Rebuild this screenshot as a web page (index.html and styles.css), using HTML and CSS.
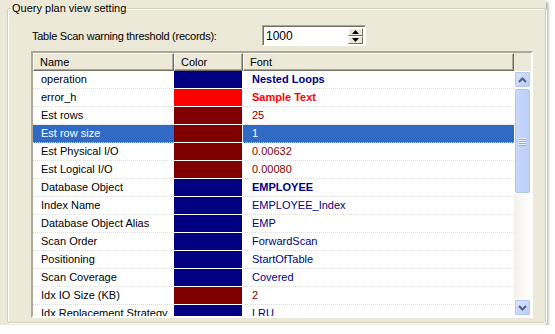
FILE: index.html
```html
<!DOCTYPE html>
<html lang="en">
<head>
  <meta charset="UTF-8" />
  <title>Query plan view setting</title>
  <link rel="stylesheet" href="styles.css">
</head>
<body>
  <div class="window">
    <fieldset class="group">
      <legend>Query plan view setting</legend>

      <div class="threshold">
        <label class="threshold-label">Table Scan warning threshold (records):</label>
        <div class="spin">
          <span class="spin-value">1000</span>
          <div class="spin-btns">
            <span class="spin-btn"><svg width="7" height="4" viewBox="0 0 7 4"><path d="M3.5 0 L7 4 L0 4 Z" fill="#000"/></svg></span>
            <span class="spin-btn"><svg width="7" height="4" viewBox="0 0 7 4"><path d="M0 0 L7 0 L3.5 4 Z" fill="#000"/></svg></span>
          </div>
        </div>
      </div>

      <div class="list">
        <div class="list-head">
          <div class="hcell h-name">Name</div>
          <div class="hcell h-color">Color</div>
          <div class="hcell h-font">Font</div>
          <div class="h-fill"></div>
        </div>
        <div class="list-body">
          <div class="rows">
            <div class="row"><div class="c-name">operation</div><div class="c-color navy-bg"></div><div class="c-font navy b">Nested Loops</div></div>
            <div class="row"><div class="c-name">error_h</div><div class="c-color red-bg"></div><div class="c-font red b">Sample Text</div></div>
            <div class="row"><div class="c-name">Est rows</div><div class="c-color maroon-bg"></div><div class="c-font maroon">25</div></div>
            <div class="row sel"><div class="c-name">Est row size</div><div class="c-color maroon-bg"></div><div class="c-font maroon">1</div></div>
            <div class="row"><div class="c-name">Est Physical I/O</div><div class="c-color maroon-bg"></div><div class="c-font maroon">0.00632</div></div>
            <div class="row"><div class="c-name">Est Logical I/O</div><div class="c-color maroon-bg"></div><div class="c-font maroon">0.00080</div></div>
            <div class="row"><div class="c-name">Database Object</div><div class="c-color navy-bg"></div><div class="c-font navy b">EMPLOYEE</div></div>
            <div class="row"><div class="c-name">Index Name</div><div class="c-color navy-bg"></div><div class="c-font navy">EMPLOYEE_Index</div></div>
            <div class="row"><div class="c-name">Database Object Alias</div><div class="c-color navy-bg"></div><div class="c-font navy">EMP</div></div>
            <div class="row"><div class="c-name">Scan Order</div><div class="c-color navy-bg"></div><div class="c-font navy">ForwardScan</div></div>
            <div class="row"><div class="c-name">Positioning</div><div class="c-color navy-bg"></div><div class="c-font navy">StartOfTable</div></div>
            <div class="row"><div class="c-name">Scan Coverage</div><div class="c-color navy-bg"></div><div class="c-font navy">Covered</div></div>
            <div class="row"><div class="c-name">Idx IO Size (KB)</div><div class="c-color maroon-bg"></div><div class="c-font maroon">2</div></div>
            <div class="row"><div class="c-name">Idx Replacement Strategy</div><div class="c-color navy-bg"></div><div class="c-font navy">LRU</div></div>
          </div>

          <div class="scrollbar">
            <div class="sb-btn"><svg width="9" height="6" viewBox="0 0 9 6"><path d="M1 5 L4.5 1.5 L8 5" fill="none" stroke="#4d6185" stroke-width="2"/></svg></div>
            <div class="sb-thumb">
              <div class="grip"><i></i><i></i><i></i><i></i></div>
            </div>
            <div class="sb-track"></div>
            <div class="sb-btn"><svg width="9" height="6" viewBox="0 0 9 6"><path d="M1 1 L4.5 4.5 L8 1" fill="none" stroke="#4d6185" stroke-width="2"/></svg></div>
          </div>
        </div>
      </div>
    </fieldset>
  </div>
</body>
</html>
```

FILE: styles.css
```css
* {
  box-sizing: border-box;
}

html, body {
  margin: 0;
  background: #fff;
  font-family: 'Liberation Sans', Arial, sans-serif;
  font-size: 11px;
  color: #000;
}

.window {
  width: 546px;
  height: 325px;
  padding: 2px 0 2px 7px;
  background: #ece9d8;
  box-shadow: 2px 2px 3px rgba(0,0,0,0.35);
}

.group {
  margin: 0;
  padding: 0 12px 4px 23px;
  border: 1px solid #d0d0bf;
  border-radius: 2px;
  box-shadow: 1px 1px 0 #fff, inset 1px 1px 0 #fff;
}

.group legend {
  margin-left: -20px;
  padding: 0 1px;
  line-height: 13px;
}

/* threshold row */
.threshold {
  display: flex;
  align-items: center;
  margin-top: 10px;
  height: 21px;
}

.threshold-label {
  width: 231px;
  padding-left: 1px;
  letter-spacing: -0.25px;
}

.spin {
  display: flex;
  align-items: center;
  width: 104px;
  height: 21px;
  background: #fff;
  border: 1px solid;
  border-color: #aca899 #fff #fff #aca899;
  box-shadow: inset 1px 1px 0 #716f64;
  padding: 1px 2px 0 3px;
}

.spin-value {
  flex: 1;
  font-size: 12px;
}

.spin-btns {
  display: flex;
  flex-direction: column;
}

.spin-btn {
  display: flex;
  align-items: center;
  justify-content: center;
  width: 15px;
  height: 8px;
  background: #ece9d8;
  border: 1px solid;
  border-color: #fff #716f64 #716f64 #fff;
}

/* list view */
.list {
  margin-top: 5px;
  width: 502px;
  border: 2px solid;
  border-color: #aca899 #fff #fff #aca899;
  background: #fff;
}

.list-head {
  display: flex;
  height: 18px;
  background: #ece9d8;
}

.hcell {
  height: 18px;
  padding-left: 6px;
  line-height: 16px;
  border: 1px solid;
  border-color: #fff #716f64 #716f64 #fff;
  box-shadow: inset -1px -1px 0 #aca899;
}

.h-name { width: 141px; }
.h-color { width: 69px; }
.h-font { width: 271px; }
.h-fill { width: 17px; }

.list-body {
  display: flex;
  height: 245px;
  overflow: hidden;
}

.rows {
  width: 481px;
}

.row {
  display: grid;
  grid-template-columns: 141px 69px 271px;
  height: 18px;
}

.c-name, .c-font {
  height: 18px;
  line-height: 17px;
  border-bottom: 1px dotted #e2dfcc;
  white-space: nowrap;
  overflow: hidden;
}

.c-name { padding-left: 8px; }
.c-font { padding-left: 9px; }

.c-color {
  border-bottom: 1px solid #fff;
  border-right: 1px solid #fff;
}

.row.sel .c-name,
.row.sel .c-font {
  background: #316ac5;
  color: #fff;
}

.b { font-weight: bold; }
.navy { color: #000080; }
.red { color: #ff0000; }
.maroon { color: #800000; }
.navy-bg { background: #000080; }
.red-bg { background: #ff0000; }
.maroon-bg { background: #800000; }

/* scrollbar */
.scrollbar {
  display: flex;
  flex-direction: column;
  width: 17px;
  background: linear-gradient(to right, #f3f1ec, #fefefb);
}

.sb-btn {
  display: flex;
  align-items: center;
  justify-content: center;
  height: 17px;
  border: 1px solid #fff;
  border-radius: 2px;
  background: linear-gradient(to bottom right, #dbe6fe, #b8cbf8);
  box-shadow: inset 0 0 0 1px #b4c8f6;
}

.sb-thumb {
  display: flex;
  align-items: center;
  justify-content: center;
  height: 106px;
  border: 1px solid #fff;
  border-radius: 3px;
  background: linear-gradient(to right, #c9d8fc, #bacdf9);
  box-shadow: inset 0 0 0 1px #aec4f5;
}

.grip {
  display: flex;
  flex-direction: column;
  gap: 1px;
}

.grip i {
  display: block;
  width: 7px;
  height: 1px;
  background: #eef4fe;
  box-shadow: 0 1px 0 #8caaf0;
}

.sb-track {
  flex: 1;
}
```
